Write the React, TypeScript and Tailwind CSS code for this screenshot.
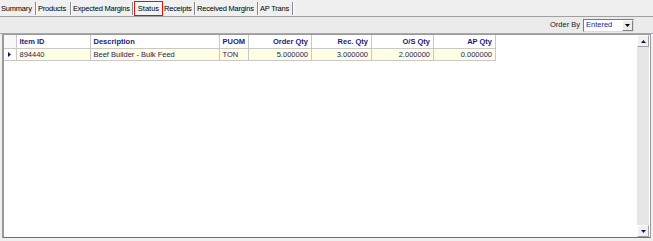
import React from 'react';

const tabs = [
    { label: 'Summary', w: 'w-[37px]' },
    { label: 'Products', w: 'w-[35px]' },
    { label: 'Expected Margins', w: 'w-[62px]' },
    { label: 'Status', w: 'w-[29px]', active: true },
    { label: 'Receipts', w: 'w-[33px]' },
    { label: 'Received Margins', w: 'w-[63px]' },
    { label: 'AP Trans', w: 'w-[35px]' },
];

const columns = [
    { title: 'Item ID', w: 'w-[74px]', right: false },
    { title: 'Description', w: 'w-[129px]', right: false },
    { title: 'PUOM', w: 'w-[29px]', right: false },
    { title: 'Order Qty', w: 'w-[63px]', right: true },
    { title: 'Rec. Qty', w: 'w-[60px]', right: true },
    { title: 'O/S Qty', w: 'w-[62px]', right: true },
    { title: 'AP Qty', w: 'w-[62px]', right: true },
];

const row = ['894440', 'Beef Builder - Bulk Feed', 'TON', '5.000000', '3.000000', '2.000000', '0.000000'];

const App: React.FC = () => {
    return (
        <div className="w-[653px] h-[241px] flex flex-col bg-[#f0f0f0] text-[7.5px] text-black overflow-hidden" style={{ fontFamily: '"Liberation Sans", Arial, sans-serif' }}>
            {/* Tab strip */}
            <div className="h-[16px] flex items-stretch pt-[1px]">
                {tabs.map((t) =>
                    t.active ? (
                        <div key={t.label} className={`${t.w} shrink-0 h-[15px] flex items-center justify-center whitespace-nowrap border-[1.5px] border-[#e01010] bg-[#f4f4f4]`}>
                            {t.label}
                        </div>
                    ) : (
                        <div key={t.label} className={`${t.w} shrink-0 h-[15px] flex items-center pl-[1px]`}>
                            <span className="flex-1 min-w-0 whitespace-nowrap tracking-[-0.2px]">{t.label}</span>
                            <span className="shrink-0 h-[13px] w-[2px] border-l border-[#8a8a8a] border-r-[1px] border-r-white"></span>
                        </div>
                    )
                )}
            </div>

            {/* Panel */}
            <div className="flex-1 flex flex-col border-t border-[#a0a0a0] px-[2px] pb-[3px]">
                {/* Toolbar */}
                <div className="h-[17px] flex items-center justify-end pr-[19px] bg-[#ebebeb] border-b border-[#a8a8a8] -mx-[2px]">
                    <span className="mr-[3px] text-[#222]">Order By</span>
                    <div className="w-[51px] h-[13px] flex items-center bg-white border border-[#7a7a7a] border-r-[#dcdcdc] border-b-[#dcdcdc]">
                        <span className="flex-1 pl-[2px] text-[#1a1aa8]">Entered</span>
                        <div className="w-[11px] h-[11px] flex items-center justify-center bg-[#ececec] border border-white border-r-[#808080] border-b-[#808080]">
                            <svg width="5" height="3" viewBox="0 0 5 3"><path d="M0 0h5L2.5 3z" fill="#000" /></svg>
                        </div>
                    </div>
                </div>

                {/* Grid */}
                <div className="flex-1 flex bg-white border-l-2 border-t border-[#9a9a9a] border-r border-b border-r-[#9a9a9a] border-b-[#707070]">
                    <div className="flex-1">
                        <table className="border-collapse table-fixed">
                            <thead>
                                <tr className="h-[13px]">
                                    <th className="w-[12px] border-r border-b border-[#c8c8c8] bg-[#f8f8f8]"></th>
                                    {columns.map((c) => (
                                        <th key={c.title} className={`${c.w} border-r border-b border-[#c8c8c8] px-[3px] font-bold text-[#1a1a80] whitespace-nowrap ${c.right ? 'text-right' : 'text-left'}`}>
                                            {c.title}
                                        </th>
                                    ))}
                                </tr>
                            </thead>
                            <tbody>
                                <tr className="h-[12px] bg-[#fffee3]">
                                    <td className="border-r border-b border-[#c8c8c8] bg-white">
                                        <div className="flex justify-center">
                                            <svg width="3" height="5" viewBox="0 0 3 5"><path d="M0 0v5l3-2.5z" fill="#10106a" /></svg>
                                        </div>
                                    </td>
                                    {row.map((v, i) => (
                                        <td key={i} className={`border-r border-b border-[#c8c8c8] px-[3px] text-[#23236a] whitespace-nowrap ${columns[i].right ? 'text-right' : 'text-left'}`}>
                                            {v}
                                        </td>
                                    ))}
                                </tr>
                            </tbody>
                        </table>
                    </div>

                    {/* Vertical scrollbar */}
                    <div className="w-[12px] flex flex-col justify-between bg-[#e6e6e6] mr-[1px]">
                        <div className="h-[12px] flex items-center justify-center bg-[#f0f0f0] border border-white border-r-[#a0a0a0] border-b-[#a0a0a0]">
                            <svg width="5" height="3" viewBox="0 0 5 3"><path d="M0 3h5L2.5 0z" fill="#10106a" /></svg>
                        </div>
                        <div className="h-[12px] flex items-center justify-center bg-[#f0f0f0] border border-white border-r-[#a0a0a0] border-b-[#a0a0a0]">
                            <svg width="5" height="3" viewBox="0 0 5 3"><path d="M0 0h5L2.5 3z" fill="#10106a" /></svg>
                        </div>
                    </div>
                </div>
            </div>
        </div>
    );
};

export default App;
